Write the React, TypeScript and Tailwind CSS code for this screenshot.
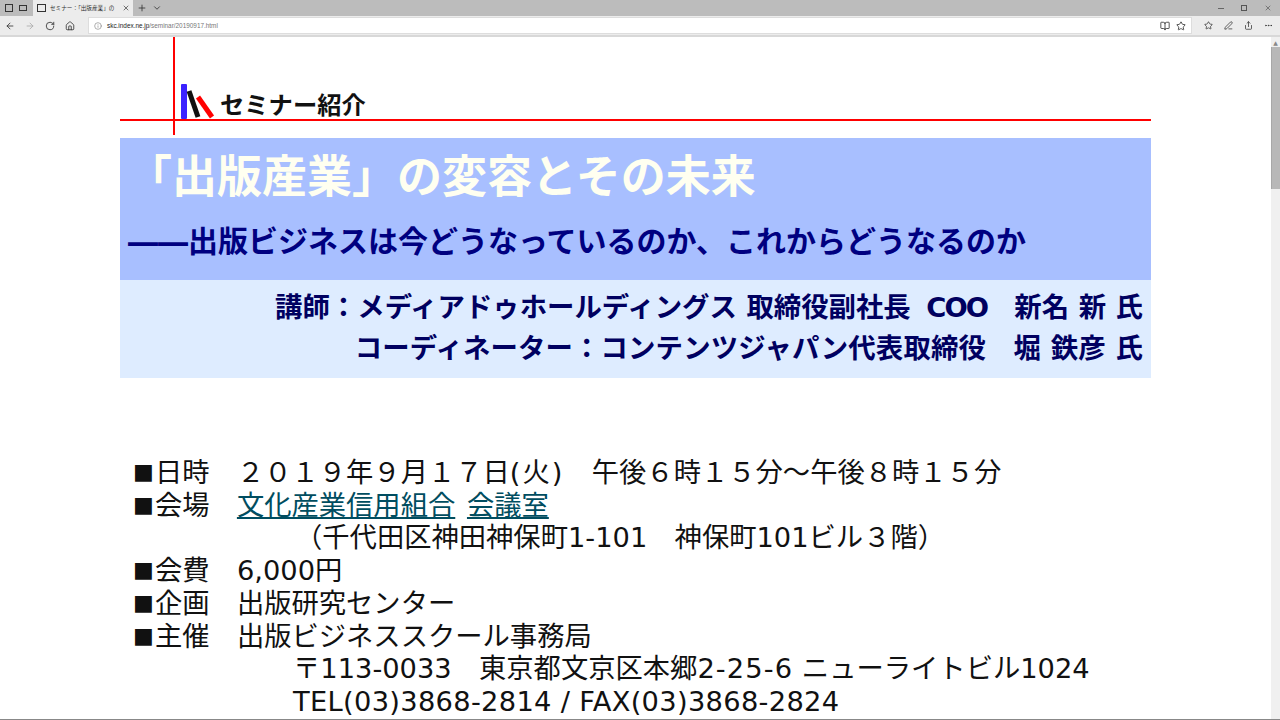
import { ArrowLeft, ArrowRight, BookOpen, ChevronDown, Home, Info, MoreHorizontal, PenLine, Plus, RotateCw, Share, Star, X } from 'lucide-react';

const jp = { fontFamily: '"DejaVu Sans", "Noto Sans CJK JP", sans-serif' };

function Logo() {
    return (
        <svg width="36" height="36" viewBox="0 0 36 36" className="shrink-0">
            <rect x="1" y="1" width="6" height="35" rx="1" fill="#3b22ff" />
            <line x1="9" y1="8" x2="18" y2="34" stroke="#111" strokeWidth="5" />
            <line x1="18" y1="14" x2="32" y2="34" stroke="#f00" strokeWidth="5" />
        </svg>
    );
}

function Mark() {
    return <span className="inline-block w-[22px] align-[3px] text-[22px] leading-none">■</span>;
}

export default function App() {
    return (
        <div className="h-[720px] w-[1280px] overflow-hidden bg-white" style={jp}>
            {/* browser chrome */}
            <div className="flex h-[16px] items-center bg-[#bcbcbc] text-[#333]">
                <div className="flex w-[33px] items-center gap-[6px] pl-[5px]">
                    <div className="h-[8px] w-[8px] border border-[#333]" />
                    <div className="h-[6px] w-[8px] border border-[#333]" />
                </div>
                <div className="flex h-[16px] w-[100px] items-center gap-[4px] bg-[#ececec] pl-[4px]">
                    <div className="h-[8px] w-[9px] border border-[#333]" />
                    <span className="w-[68px] whitespace-nowrap text-[5.6px]">セミナー：「出版産業」の</span>
                    <X size={8} />
                </div>
                <Plus size={10} className="ml-[4px]" />
                <ChevronDown size={10} className="ml-[5px]" />
                <div className="ml-auto flex items-center gap-[17px] pr-[8px] text-[#555]">
                    <span className="h-px w-[6px] bg-[#666]" />
                    <div className="h-[6px] w-[6px] border border-[#555]" />
                    <X size={8} />
                </div>
            </div>
            <div className="flex h-[19px] items-center bg-[#ececec] text-[#333]">
                <div className="flex w-[88px] items-center gap-[10px] pl-[5px]">
                    <ArrowLeft size={10} />
                    <ArrowRight size={10} className="text-[#aaa]" />
                    <RotateCw size={10} />
                    <Home size={10} />
                </div>
                <div className="flex h-[17px] w-[1104px] items-center border border-[#ddd] bg-white pl-[5px]">
                    <Info size={8} className="text-[#888]" />
                    <span className="ml-[5px] text-[6.4px] text-[#222]" style={{ fontFamily: '"Liberation Sans", sans-serif' }}>
                        skc.index.ne.jp<span className="text-[#777]">/seminar/20190917.html</span>
                    </span>
                    <div className="ml-auto flex items-center gap-[6px] pr-[5px]">
                        <BookOpen size={10} />
                        <Star size={10} />
                    </div>
                </div>
                <div className="flex flex-1 items-center gap-[11px] pl-[12px]">
                    <Star size={9} />
                    <PenLine size={9} />
                    <Share size={9} />
                    <MoreHorizontal size={9} />
                </div>
            </div>
            <div className="h-[2px] bg-[#d8d8d8]" />

            {/* page */}
            <div className="flex h-[682px]">
                <div className="relative w-[1271px] overflow-hidden">
                    <div className="absolute left-[173px] top-0 h-[98px] w-[2px] bg-[#f00]" />
                    <div className="flex h-[82px] items-end gap-[4px] pl-[180px]">
                        <Logo />
                        <div className="whitespace-nowrap text-[24.3px] font-bold leading-[26px] text-[#111]">セミナー紹介</div>
                    </div>
                    <div className="ml-[120px] w-[1031px]">
                        <div className="h-[2px] bg-[#f00]" />
                        <div className="h-[17px]" />
                        <div className="h-[142px] bg-[#a8bfff] pt-[11px]">
                            <div className="whitespace-nowrap pl-[7px] text-[45px] font-bold leading-[58px] text-[#fffff0]">「出版産業」の変容とその未来</div>
                            <div className="mt-[13px] whitespace-nowrap pl-[8px] text-[30px] font-bold leading-[44px] text-[#000080]">――出版ビジネスは今どうなっているのか、これからどうなるのか</div>
                        </div>
                        <div className="h-[98px] bg-[#deecff] pr-[8px] pt-[7px] text-right text-[27.4px] font-bold leading-[41px] text-[#000060]">
                            <div className="whitespace-pre">講師：メディアドゥホールディングス 取締役副社長 <span className="ml-[6px] tracking-[-2px]">COO</span>　新名 新 氏</div>
                            <div className="whitespace-pre tracking-[0.14px]">コーディネーター：コンテンツジャパン代表取締役　堀 鉄彦 氏</div>
                        </div>
                    </div>
                    <div className="ml-[133px] mt-[79px] text-[27.3px] leading-[32.7px] text-[#111]">
                        <div className="whitespace-pre"><Mark />日時　２０１９年９月１７日<span className="tracking-[2px]">(火)</span>　午後６時１５分～午後８時１５分</div>
                        <div className="whitespace-pre"><Mark />会場　<span className="text-[#004d60] underline">文化産業信用組合</span><span className="tracking-[3px]"> </span><span className="text-[#004d60] underline">会議室</span></div>
                        <div className="whitespace-pre pl-[162px]">（千代田区神田神保町1-101　神保町101ビル３階）</div>
                        <div className="whitespace-pre"><Mark />会費　6,000円</div>
                        <div className="whitespace-pre"><Mark />企画　出版研究センター</div>
                        <div className="whitespace-pre"><Mark />主催　出版ビジネススクール事務局</div>
                        <div className="whitespace-pre pl-[160px]">〒113-0033　東京都文京区本郷<span className="tracking-[1.1px]">2-25-6</span> ニューライトビル1024</div>
                        <div className="whitespace-pre pl-[160px] tracking-[0.3px]">TEL(03)3868-2814 / FAX(03)3868-2824</div>
                    </div>
                </div>
                <div className="w-[9px] bg-[#f0f0f0]">
                    <div className="flex h-[10px] items-center justify-center text-[6px] text-[#888]">▲</div>
                    <div className="h-[142px] border-l border-[#a8a8a8] bg-[#b8b8b8]" />
                </div>
            </div>
            <div className="h-px bg-[#888]" />
        </div>
    );
}
